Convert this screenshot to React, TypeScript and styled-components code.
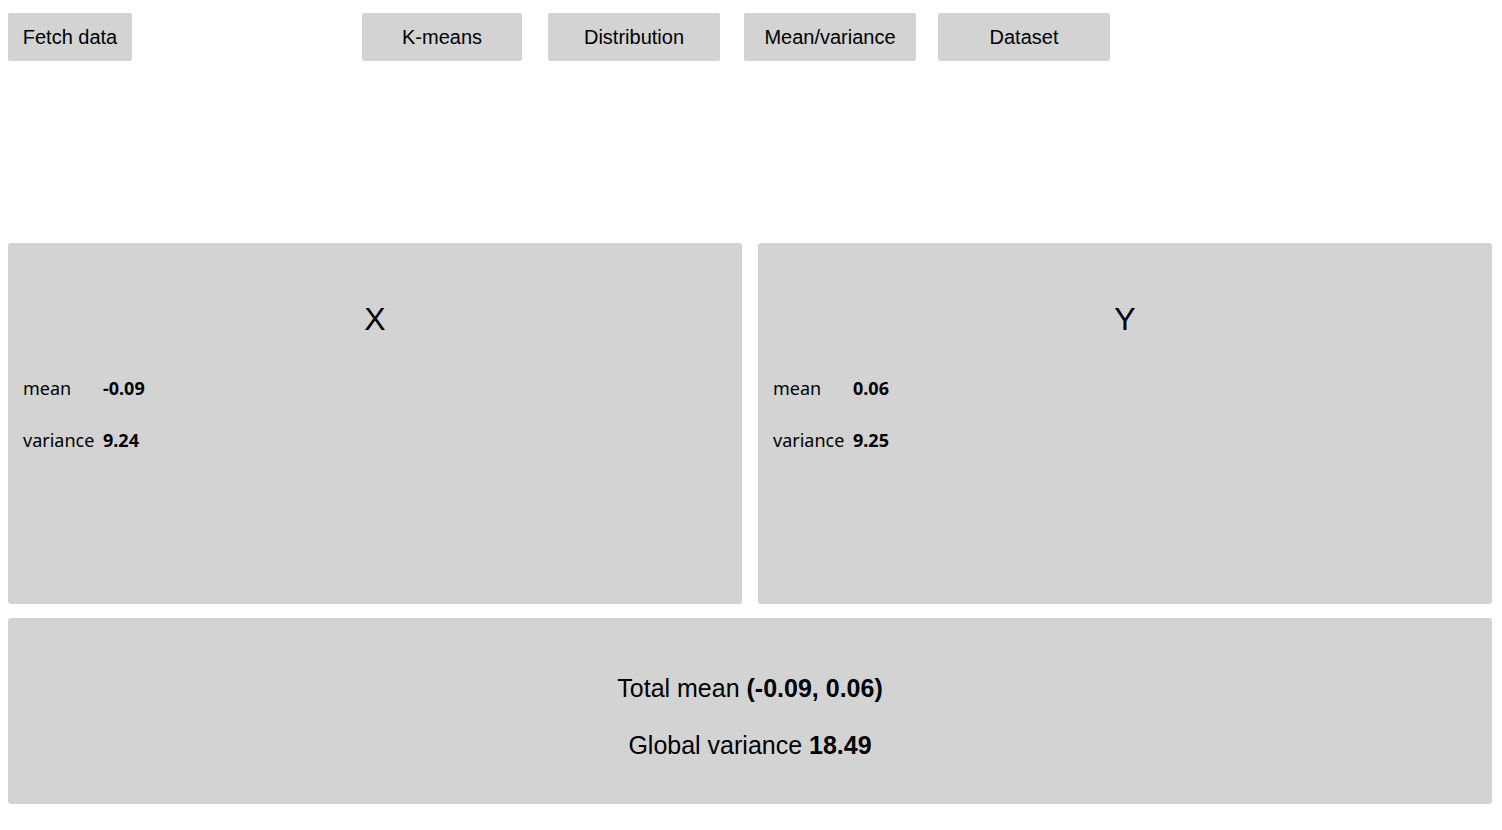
import styled, { createGlobalStyle } from 'styled-components'

const GlobalStyle = createGlobalStyle`
    body {
        margin: 8px;
        background: #ffffff;
        font-family: "Liberation Sans", Arial, sans-serif;
        color: #000000;
    }
`

const axes = [
    { name: 'X', mean: '-0.09', variance: '9.24' },
    { name: 'Y', mean: '0.06', variance: '9.25' },
]

const App: React.FC = () => {
    return (
        <>
            <GlobalStyle />
            <Toolbar>
                <Button $width={124}>Fetch data</Button>
                <Nav>
                    <Button $width={160}>K-means</Button>
                    <Button $width={172} $offset={26}>Distribution</Button>
                    <Button $width={172} $offset={24}>Mean/variance</Button>
                    <Button $width={172} $offset={22}>Dataset</Button>
                </Nav>
            </Toolbar>
            <Stats>
                {axes.map(axis => (
                    <Panel key={axis.name}>
                        <Title>{axis.name}</Title>
                        <Table>
                            <Label>mean</Label>
                            <Value>{axis.mean}</Value>
                            <Label>variance</Label>
                            <Value>{axis.variance}</Value>
                        </Table>
                    </Panel>
                ))}
                <Summary>
                    <SummaryLine>
                        Total mean <b>(-0.09, 0.06)</b>
                    </SummaryLine>
                    <SummaryLine>
                        Global variance <b>18.49</b>
                    </SummaryLine>
                </Summary>
            </Stats>
        </>
    )
}

const Toolbar = styled.div`
    display: flex;
    align-items: center;
    margin-top: 5px;
`

const Nav = styled.div`
    display: flex;
    margin-left: 230px;
`

const Button = styled.button<{ $width: number; $offset?: number }>`
    width: ${p => p.$width}px;
    height: 48px;
    margin-left: ${p => p.$offset ?? 0}px;
    border: none;
    border-radius: 2px;
    background: #d3d3d3;
    font-family: "Liberation Sans", Arial, sans-serif;
    font-size: 20px;
    color: #000;
    padding: 0;
    cursor: pointer;
`

const Stats = styled.div`
    display: grid;
    grid-template-columns: 1fr 1fr;
    column-gap: 16px;
    row-gap: 14px;
    margin-top: 182px;
    margin-right: 2px;
`

const Panel = styled.div`
    height: 361px;
    box-sizing: border-box;
    background: #d3d3d3;
    border-radius: 3px;
    padding: 58px 15px 0;
`

const Title = styled.div`
    text-align: center;
    font-size: 32px;
    line-height: 37px;
    margin-bottom: 38px;
`

const Table = styled.div`
    display: grid;
    grid-template-columns: max-content max-content;
    column-gap: 8px;
    row-gap: 28px;
    font-family: "Noto Sans", "Open Sans", sans-serif;
    font-size: 18px;
    line-height: 24px;
`

const Label = styled.span`
    min-width: 72px;
`

const Value = styled.span`
    font-weight: bold;
`

const Summary = styled.div`
    grid-column: 1 / -1;
    height: 186px;
    box-sizing: border-box;
    background: #d3d3d3;
    border-radius: 3px;
    padding-top: 56px;
    display: flex;
    flex-direction: column;
    align-items: center;
    gap: 28px;
`

const SummaryLine = styled.div`
    font-size: 25px;
    line-height: 29px;
`

export default App
